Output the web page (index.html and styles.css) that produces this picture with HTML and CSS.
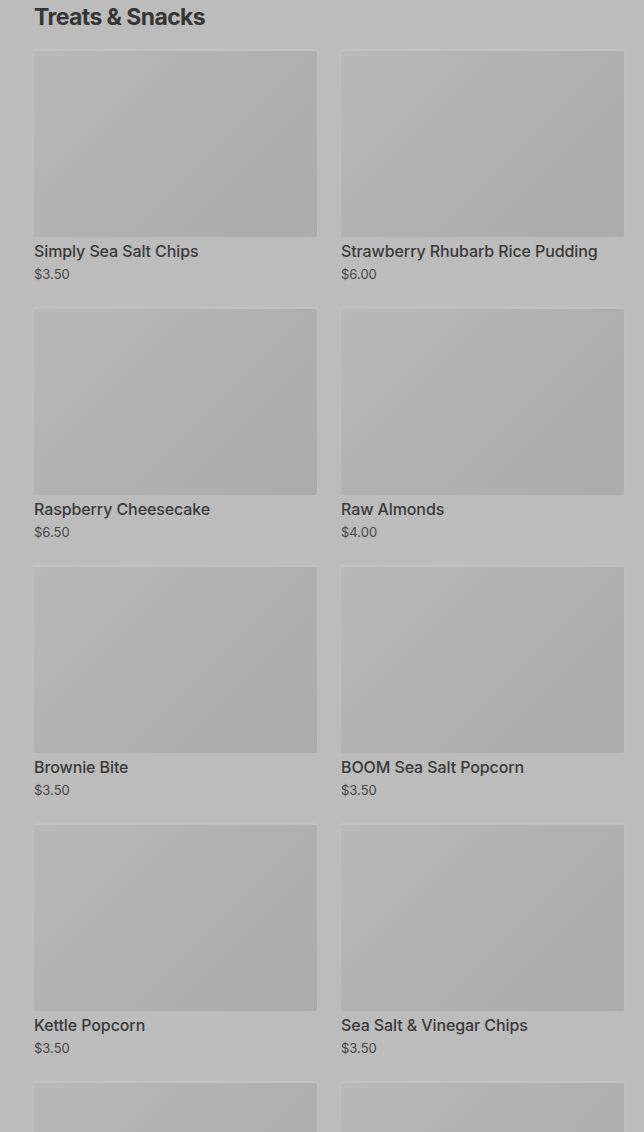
FILE: index.html
```html
<!DOCTYPE html>
<html lang="en">
  <head>
    <meta charset="UTF-8" />
    <meta name="viewport" content="width=device-width, initial-scale=1.0" />
    <title>Treats &amp; Snacks</title>
    <link rel="stylesheet" href="styles.css">
  </head>
  <body>
    <div class="menu-section">
      <h2 class="section-title">Treats &amp; Snacks</h2>
      <div class="item-grid">
        <div class="item-card">
          <div class="item-image"></div>
          <div class="item-name">Simply Sea Salt Chips</div>
          <div class="item-price">$3.50</div>
        </div>
        <div class="item-card">
          <div class="item-image"></div>
          <div class="item-name">Strawberry Rhubarb Rice Pudding</div>
          <div class="item-price">$6.00</div>
        </div>
        <div class="item-card">
          <div class="item-image"></div>
          <div class="item-name">Raspberry Cheesecake</div>
          <div class="item-price">$6.50</div>
        </div>
        <div class="item-card">
          <div class="item-image"></div>
          <div class="item-name">Raw Almonds</div>
          <div class="item-price">$4.00</div>
        </div>
        <div class="item-card">
          <div class="item-image"></div>
          <div class="item-name">Brownie Bite</div>
          <div class="item-price">$3.50</div>
        </div>
        <div class="item-card">
          <div class="item-image"></div>
          <div class="item-name">BOOM Sea Salt Popcorn</div>
          <div class="item-price">$3.50</div>
        </div>
        <div class="item-card">
          <div class="item-image"></div>
          <div class="item-name">Kettle Popcorn</div>
          <div class="item-price">$3.50</div>
        </div>
        <div class="item-card">
          <div class="item-image"></div>
          <div class="item-name">Sea Salt &amp; Vinegar Chips</div>
          <div class="item-price">$3.50</div>
        </div>
        <div class="item-card">
          <div class="item-image"></div>
        </div>
        <div class="item-card">
          <div class="item-image"></div>
        </div>
      </div>
    </div>
  </body>
</html>
```

FILE: styles.css
```css
body {
  margin: 0;
  font-family: Inter, "Noto Sans", sans-serif;
  background-color: #bcbcbc;
  overflow: hidden;
}
.menu-section {
  padding: 2px 20px 0 34px;
}
.section-title {
  margin: 0 0 19px 0;
  font-size: 23px;
  line-height: 30px;
  font-weight: 700;
  letter-spacing: -0.6px;
  color: #363636;
}
.item-grid {
  display: grid;
  grid-template-columns: 1fr 1fr;
  column-gap: 24px;
  row-gap: 26px;
}
.item-card {
  display: flex;
  flex-direction: column;
}
.item-image {
  height: 186px;
  border-radius: 2px;
  background: linear-gradient(135deg, #b9b9b9 0%, #b1b1b1 45%, #acacac 100%);
  box-shadow: 0 -2px 3px rgba(255, 255, 255, 0.12);
}
.item-name {
  margin-top: 3px;
  font-size: 16px;
  line-height: 22px;
  font-weight: 500;
  letter-spacing: -0.1px;
  color: #3a3a3a;
}
.item-price {
  margin-top: 3px;
  font-size: 13px;
  line-height: 18px;
  color: #464646;
}
```
